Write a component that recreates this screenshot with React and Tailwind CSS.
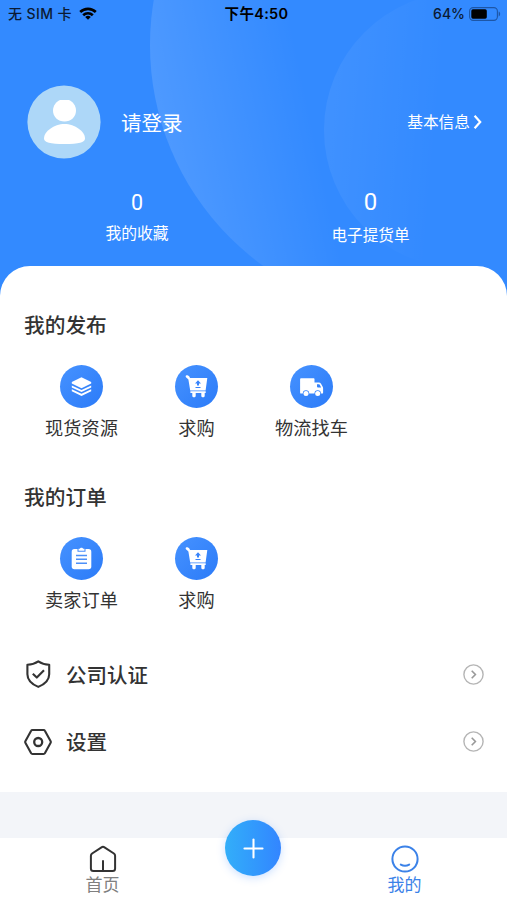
import { Plus } from 'lucide-react';

const publishItems = [
  { key: 'stock', label: '现货资源', Icon: LayersIcon },
  { key: 'buy', label: '求购', Icon: CartIcon },
  { key: 'logistics', label: '物流找车', Icon: TruckIcon },
];

const orderItems = [
  { key: 'seller', label: '卖家订单', Icon: ClipboardIcon },
  { key: 'buy', label: '求购', Icon: CartIcon },
];

export default function App() {
  return (
    <div className="flex h-[900px] w-[507px] flex-col overflow-hidden bg-[#f3f5f9] font-['Noto_Sans_CJK_SC',sans-serif] text-[#333]">
      <div className="bg-[#338aff]">
        <Header />
        <main className="h-[526px] rounded-t-[30px] bg-white pt-[43px]">
          <Section title="我的发布" items={publishItems} />
          <div className="h-[40px]" />
          <Section title="我的订单" items={orderItems} />
          <div className="mt-[28px]">
            <MenuRow label="公司认证" Icon={ShieldIcon} />
            <MenuRow label="设置" Icon={SettingsIcon} />
          </div>
        </main>
      </div>
      <TabBar />
    </div>
  );
}

function Header() {
  return (
    <header className="relative h-[266px] overflow-hidden text-white">
      {/* Decorative circles */}
      <div className="absolute -top-[227px] left-[150px] h-[544px] w-[544px] rounded-full bg-linear-[78deg] from-white/13 from-8% to-transparent to-31%" />
      <div className="absolute -top-[8px] left-[324px] h-[276px] w-[276px] rounded-full bg-linear-[95deg] from-white/7 to-transparent to-42%" />

      <div className="relative">
        <StatusBar />
        <div className="mt-[57px] flex h-[74px] items-center pr-[25px] pl-[27px]">
          <Avatar />
          <span className="ml-[20px] text-[20.5px] leading-[30px]">请登录</span>
          <div className="ml-auto flex items-center gap-[3px]">
            <span className="text-[15.7px] leading-[24px]">基本信息</span>
            <svg width="9" height="16" viewBox="0 0 9 16" fill="none" stroke="currentColor" strokeWidth="2.2">
              <path d="M1.6 1.8 7.2 8l-5.6 6.2" />
            </svg>
          </div>
        </div>
        <div className="flex pl-[20px]">
          <div className="w-[234px] pt-[28px] text-center">
            <div className="h-[30px] font-['Roboto',sans-serif] text-[21.5px] leading-[32px]">0</div>
            <div className="mt-[4px] text-[15.8px] leading-[24px]">我的收藏</div>
          </div>
          <div className="w-[233px] pt-[28px] text-center">
            <div className="h-[30px] font-['Roboto',sans-serif] text-[24px] leading-[31px]">0</div>
            <div className="mt-[5px] text-[15.6px] leading-[24px]">电子提货单</div>
          </div>
        </div>
      </div>
    </header>
  );
}

function StatusBar() {
  return (
    <div className="grid h-[28px] grid-cols-3 items-center pr-[6px] pl-[8px] font-['Inter','Noto_Sans_CJK_SC',sans-serif] text-[14px] leading-[20px] font-medium text-[#0b1a33]">
      <div className="flex items-center gap-[7px]">
        <span className="whitespace-nowrap tracking-[0.4px]">无 SIM 卡</span>
        <svg className="-mt-px" width="18" height="13" viewBox="0 0 18 13" fill="none" stroke="#000" strokeWidth="2.6">
          <path d="M1.2 5a11.2 11.2 0 0 1 15.6 0" />
          <path d="M4.2 8.2a6.9 6.9 0 0 1 9.6 0" />
          <path d="M9 12.8 6.2 10a4 4 0 0 1 5.6 0Z" fill="#000" stroke="none" />
        </svg>
      </div>
      <span className="pl-[4px] text-center text-[14.5px] font-semibold tracking-[0.3px] text-black">下午4:50</span>
      <div className="flex items-center justify-end gap-[4px]">
        <span>64%</span>
        <svg className="-mt-px" width="32" height="14" viewBox="0 0 32 14">
          <rect x="0.6" y="0.6" width="27.8" height="12.8" rx="3.6" fill="none" stroke="#1d56a6" strokeWidth="1.1" />
          <rect x="2.3" y="2.3" width="15.5" height="9.4" rx="1.6" fill="#000" />
          <path d="M29.7 4.6c1.9.6 1.9 4.2 0 4.8Z" fill="#1d56a6" />
        </svg>
      </div>
    </div>
  );
}

function Avatar() {
  return (
    <svg width="74" height="74" viewBox="0 0 74 74">
      <circle cx="37" cy="37" r="36.6" fill="#add7f8" />
      <path d="M33 15h9c4 1.5 7 6 7 10.5C49 32 44 36.500 37.500 36.500S26 32 26 25.500C26 21 29 16.500 33 15Z" fill="#fff" />
      <path d="M37.500 39C48 39 58 46.500 58 53.500c0 4-6 5.500-20.500 5.500S17 57.500 17 53.500C17 46.500 27 39 37.500 39Z" fill="#fff" />
    </svg>
  );
}

function Section({ title, items }) {
  return (
    <section>
      <h2 className="pl-[24px] text-[20.7px] leading-[30px] font-medium">{title}</h2>
      <div className="mt-[26px] flex pl-[24px]">
        {items.map(({ key, label, Icon }) => (
          <div key={key} className="flex w-[115px] flex-col items-center">
            <div className="flex h-[43px] w-[43px] items-center justify-center rounded-full bg-linear-to-br from-[#4692ff] to-[#2b7bf8]">
              <Icon />
            </div>
            <span className="mt-[5px] text-[18.2px] leading-[28px]">{label}</span>
          </div>
        ))}
      </div>
    </section>
  );
}

function MenuRow({ label, Icon }) {
  return (
    <div className="flex h-[67px] items-center pr-[23px] pl-[24px]">
      <Icon />
      <span className="-mt-[2px] ml-[14px] text-[20.5px] leading-[30px] font-medium">{label}</span>
      <svg className="ml-auto" width="21" height="21" viewBox="0 0 21 21" fill="none" stroke="#b5b5b5" strokeWidth="1.4">
        <circle cx="10.5" cy="10.5" r="9.6" />
        <path d="m8.7 6.8 3.7 3.7-3.7 3.7" stroke="#999" strokeWidth="1.6" />
      </svg>
    </div>
  );
}

function TabBar() {
  return (
    <nav className="relative mt-auto flex h-[62px] bg-white">
      <div className="flex w-[205px] flex-col items-center pt-[7px] text-[#808080]">
        <svg width="28" height="28" viewBox="0 0 28 28" fill="none" stroke="#333" strokeWidth="2" strokeLinejoin="round" strokeLinecap="round">
          <path d="M1.9 10.8c0-1 .4-1.700 1.200-2.300L12.500 2.300c.9-.6 2.100-.6 3 0l9.400 6.200c.8.6 1.200 1.300 1.200 2.300v12.700c0 1.600-1 2.500-2.500 2.500H4.400c-1.500 0-2.500-.9-2.500-2.500Z" />
          <path d="M14 16v9.500" />
        </svg>
        <span className="-mt-px text-[17px] leading-[24px]">首页</span>
      </div>
      <div className="ml-auto flex w-[205px] flex-col items-center pt-[7px] text-[#3b82e8]">
        <svg width="28" height="28" viewBox="0 0 28 28" fill="none" stroke="currentColor" strokeWidth="2" strokeLinecap="round">
          <circle cx="14" cy="14" r="12.6" />
          <path d="M9.8 19.600c2.600 1.500 5.800 1.500 8.400 0" />
        </svg>
        <span className="-mt-px text-[17px] leading-[24px]">我的</span>
      </div>
      <button className="absolute -top-[18px] left-[225px] flex h-[56px] w-[56px] items-center justify-center rounded-full bg-linear-to-r from-[#33aef9] to-[#3385ff] text-white shadow-[0_2px_8px_rgba(51,133,255,0.25)]">
        <Plus size={31} strokeWidth={1.6} />
      </button>
    </nav>
  );
}

function LayersIcon() {
  return (
    <svg width="21" height="21" viewBox="0 0 21 21" fill="#fff">
      <path d="M10.5 1.300 20.200 6v1.600l-9.700 4.600L.8 7.600V6Z" />
      <path d="m.8 9.500 9.700 4.500 9.700-4.500v1.900l-9.700 4.700L.8 11.400Z" />
      <path d="m.8 13.200 9.700 4.500 9.700-4.500v2l-9.700 4.900-9.700-4.900Z" />
    </svg>
  );
}

function CartIcon() {
  return (
    <svg width="23" height="23" viewBox="0 0 23 23" fill="#fff">
      <path d="M.6 1.200C.8.1 2 0 3 .4c1.200.5 1.700 1.400 2 2.500h17.300l-1.700 12.600H5.200L3.400 4.600C2.700 3.300.7 2.800.6 1.200Z" />
      <path d="M5.400 16.200h15.300v1.900h-1v2.600c0 2-3.400 2-3.400 0v-2.600h-5.600v2.600c0 2-3.400 2-3.400 0v-2.600H5.400Z" />
      <path d="m13 5.300 3 3.200h-2v2h-2v-2h-2ZM10.500 12h5v1h-5Z" fill="#3884fb" />
    </svg>
  );
}

function TruckIcon() {
  return (
    <svg width="25" height="20" viewBox="0 0 25 20" fill="#fff">
      <path d="M2.300 1.200h12.200c.7 0 1 .4 1 1v3.300h4.300c1 0 1.700.4 2.200 1.200l1.700 3.100c.3.500.4 1 .4 1.600v4c0 .8-.4 1.200-1.200 1.200H2.300c-.8 0-1.200-.4-1.200-1.200v-13c0-.8.4-1.200 1.200-1.200Z" />
      <path d="M18 7.200h1.800c.5 0 .8.200 1 .6l1.300 2.600H19c-.6 0-1-.3-1-.9Z" fill="#3583fb" />
      <circle cx="7" cy="16.400" r="3.200" fill="#3583fb" />
      <circle cx="18.700" cy="16.400" r="3.200" fill="#3583fb" />
      <circle cx="7" cy="16.400" r="2.500" />
      <circle cx="18.700" cy="16.400" r="2.500" />
    </svg>
  );
}

function ClipboardIcon() {
  return (
    <svg width="21" height="23" viewBox="0 0 21 23" fill="#fff">
      <rect x="0.7" y="2" width="19.6" height="20.2" rx="2.7" />
      <path d="M6.500 1.800h8v2.900h-8Z" fill="#3884fb" />
      <path d="M7.500 1.800h1.200c.6-1.500 3-1.500 3.600 0h1.200v2h-6Z" />
      <path d="M5 8.500h11M5 12.300h11M5 16.200h11" stroke="#4d90f8" strokeWidth="1.4" />
    </svg>
  );
}

function ShieldIcon() {
  return (
    <svg className="-mt-px" width="28" height="28" viewBox="0 0 28 28" fill="none" stroke="#333" strokeWidth="2.1" strokeLinejoin="round">
      <path d="M14.300 1.300c3.200 2.200 7 3.300 10.900 3.500v9.400c0 6-4.500 10-10.900 12.700C7.900 24.200 3.400 20.200 3.400 14.200V4.800c3.900-.2 7.700-1.300 10.900-3.500Z" />
      <path d="m8.800 13.700 4 3.900 7.200-7.400" />
    </svg>
  );
}

function SettingsIcon() {
  return (
    <svg width="28" height="28" viewBox="0 0 28 28" fill="none" stroke="#333" strokeWidth="2.1" strokeLinejoin="round">
      <path d="M8.500 2h11c.7 0 1.200.3 1.500.9l5.500 10c.4.700.4 1.500 0 2.200l-5.500 10c-.3.600-.8.900-1.500.9h-11c-.7 0-1.200-.3-1.500-.9l-5.500-10c-.4-.7-.4-1.500 0-2.200l5.500-10c.3-.6.800-.9 1.500-.9Z" />
      <circle cx="14.200" cy="14" r="4" strokeWidth="2.3" />
    </svg>
  );
}
